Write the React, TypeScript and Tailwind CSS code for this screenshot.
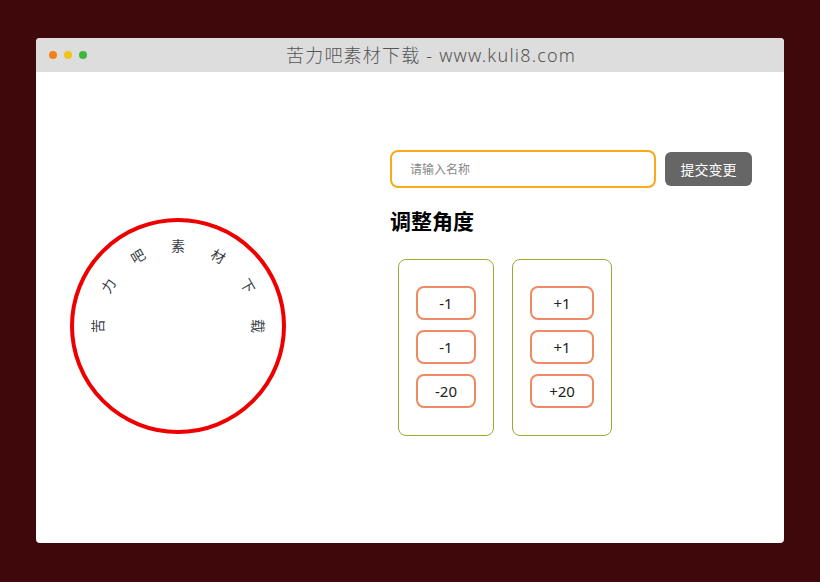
import { useState } from 'react'

const letters = ['苦', '力', '吧', '素', '材', '下', '载']

function RingText() {
  return (
    <div className="relative h-[216px] w-[216px] rounded-full border-4 border-[#ee0000]">
      {letters.map((ch, i) => {
        const angle = -90 + i * 30
        return (
          <span
            key={i}
            className="absolute left-1/2 top-1/2 -ml-[8px] -mt-[10px] flex h-[20px] w-[16px] items-center justify-center text-[14px] leading-none text-[#3a3f48]"
            style={{ transform: `rotate(${angle}deg) translateY(-80px)` }}
          >
            {ch}
          </span>
        )
      })}
    </div>
  )
}

function StepButton({ label, wide }: { label: string; wide?: boolean }) {
  return (
    <button
      className={`${wide ? 'w-[64px]' : 'w-[60px]'} h-[34px] rounded-lg border-2 border-[#ef8a64] bg-white text-[15px] text-[#222]`}
    >
      {label}
    </button>
  )
}

export default function App() {
  const [name, setName] = useState('')

  return (
    <div
      className="h-[582px] w-[820px] bg-[#3f080a] pl-[36px] pt-[38px]"
      style={{ fontFamily: '"Noto Sans", "Noto Sans CJK SC", sans-serif' }}
    >
      <div className="flex h-[505px] w-[748px] flex-col overflow-hidden rounded-[4px] bg-white">
        {/* Title bar */}
        <div className="flex h-[34px] items-center bg-[#dddddd] pl-[13px]">
          <div className="flex gap-[7px]">
            <span className="h-[8px] w-[8px] rounded-full bg-[#f57f17]" />
            <span className="h-[8px] w-[8px] rounded-full bg-[#f0c419]" />
            <span className="h-[8px] w-[8px] rounded-full bg-[#3cb93c]" />
          </div>
          <div className="ml-[199px] text-[18px] font-light tracking-[1.2px] text-[#555]">
            苦力吧素材下载 - www.kuli8.com
          </div>
        </div>

        {/* Content */}
        <div className="flex flex-1">
          <div className="pl-[34px] pt-[146px]">
            <RingText />
          </div>

          <div className="ml-[104px] pt-[78px]">
            <div className="flex items-center">
              <input
                value={name}
                onChange={(e) => setName(e.target.value)}
                placeholder="请输入名称"
                className="h-[38px] w-[266px] rounded-lg border-2 border-[#fba81a] pl-[18px] text-[12px] text-[#333] outline-none placeholder:text-[#888]"
              />
              <button className="ml-[9px] h-[34px] w-[87px] rounded-md bg-[#666666] text-[14px] text-white">
                提交变更
              </button>
            </div>

            <h2 className="mt-[19px] text-[21px] font-bold leading-[28px] text-black">调整角度</h2>

            <div className="ml-[8px] mt-[24px] flex gap-[18px]">
              <div className="flex h-[177px] w-[96px] flex-col gap-[10px] rounded-lg border border-[#9aab3c] px-[17px] pt-[26px]">
                <StepButton label="-1" />
                <StepButton label="-1" />
                <StepButton label="-20" />
              </div>
              <div className="flex h-[177px] w-[100px] flex-col gap-[10px] rounded-lg border border-[#9aab3c] px-[17px] pt-[26px]">
                <StepButton label="+1" wide />
                <StepButton label="+1" wide />
                <StepButton label="+20" wide />
              </div>
            </div>
          </div>
        </div>
      </div>
    </div>
  )
}
